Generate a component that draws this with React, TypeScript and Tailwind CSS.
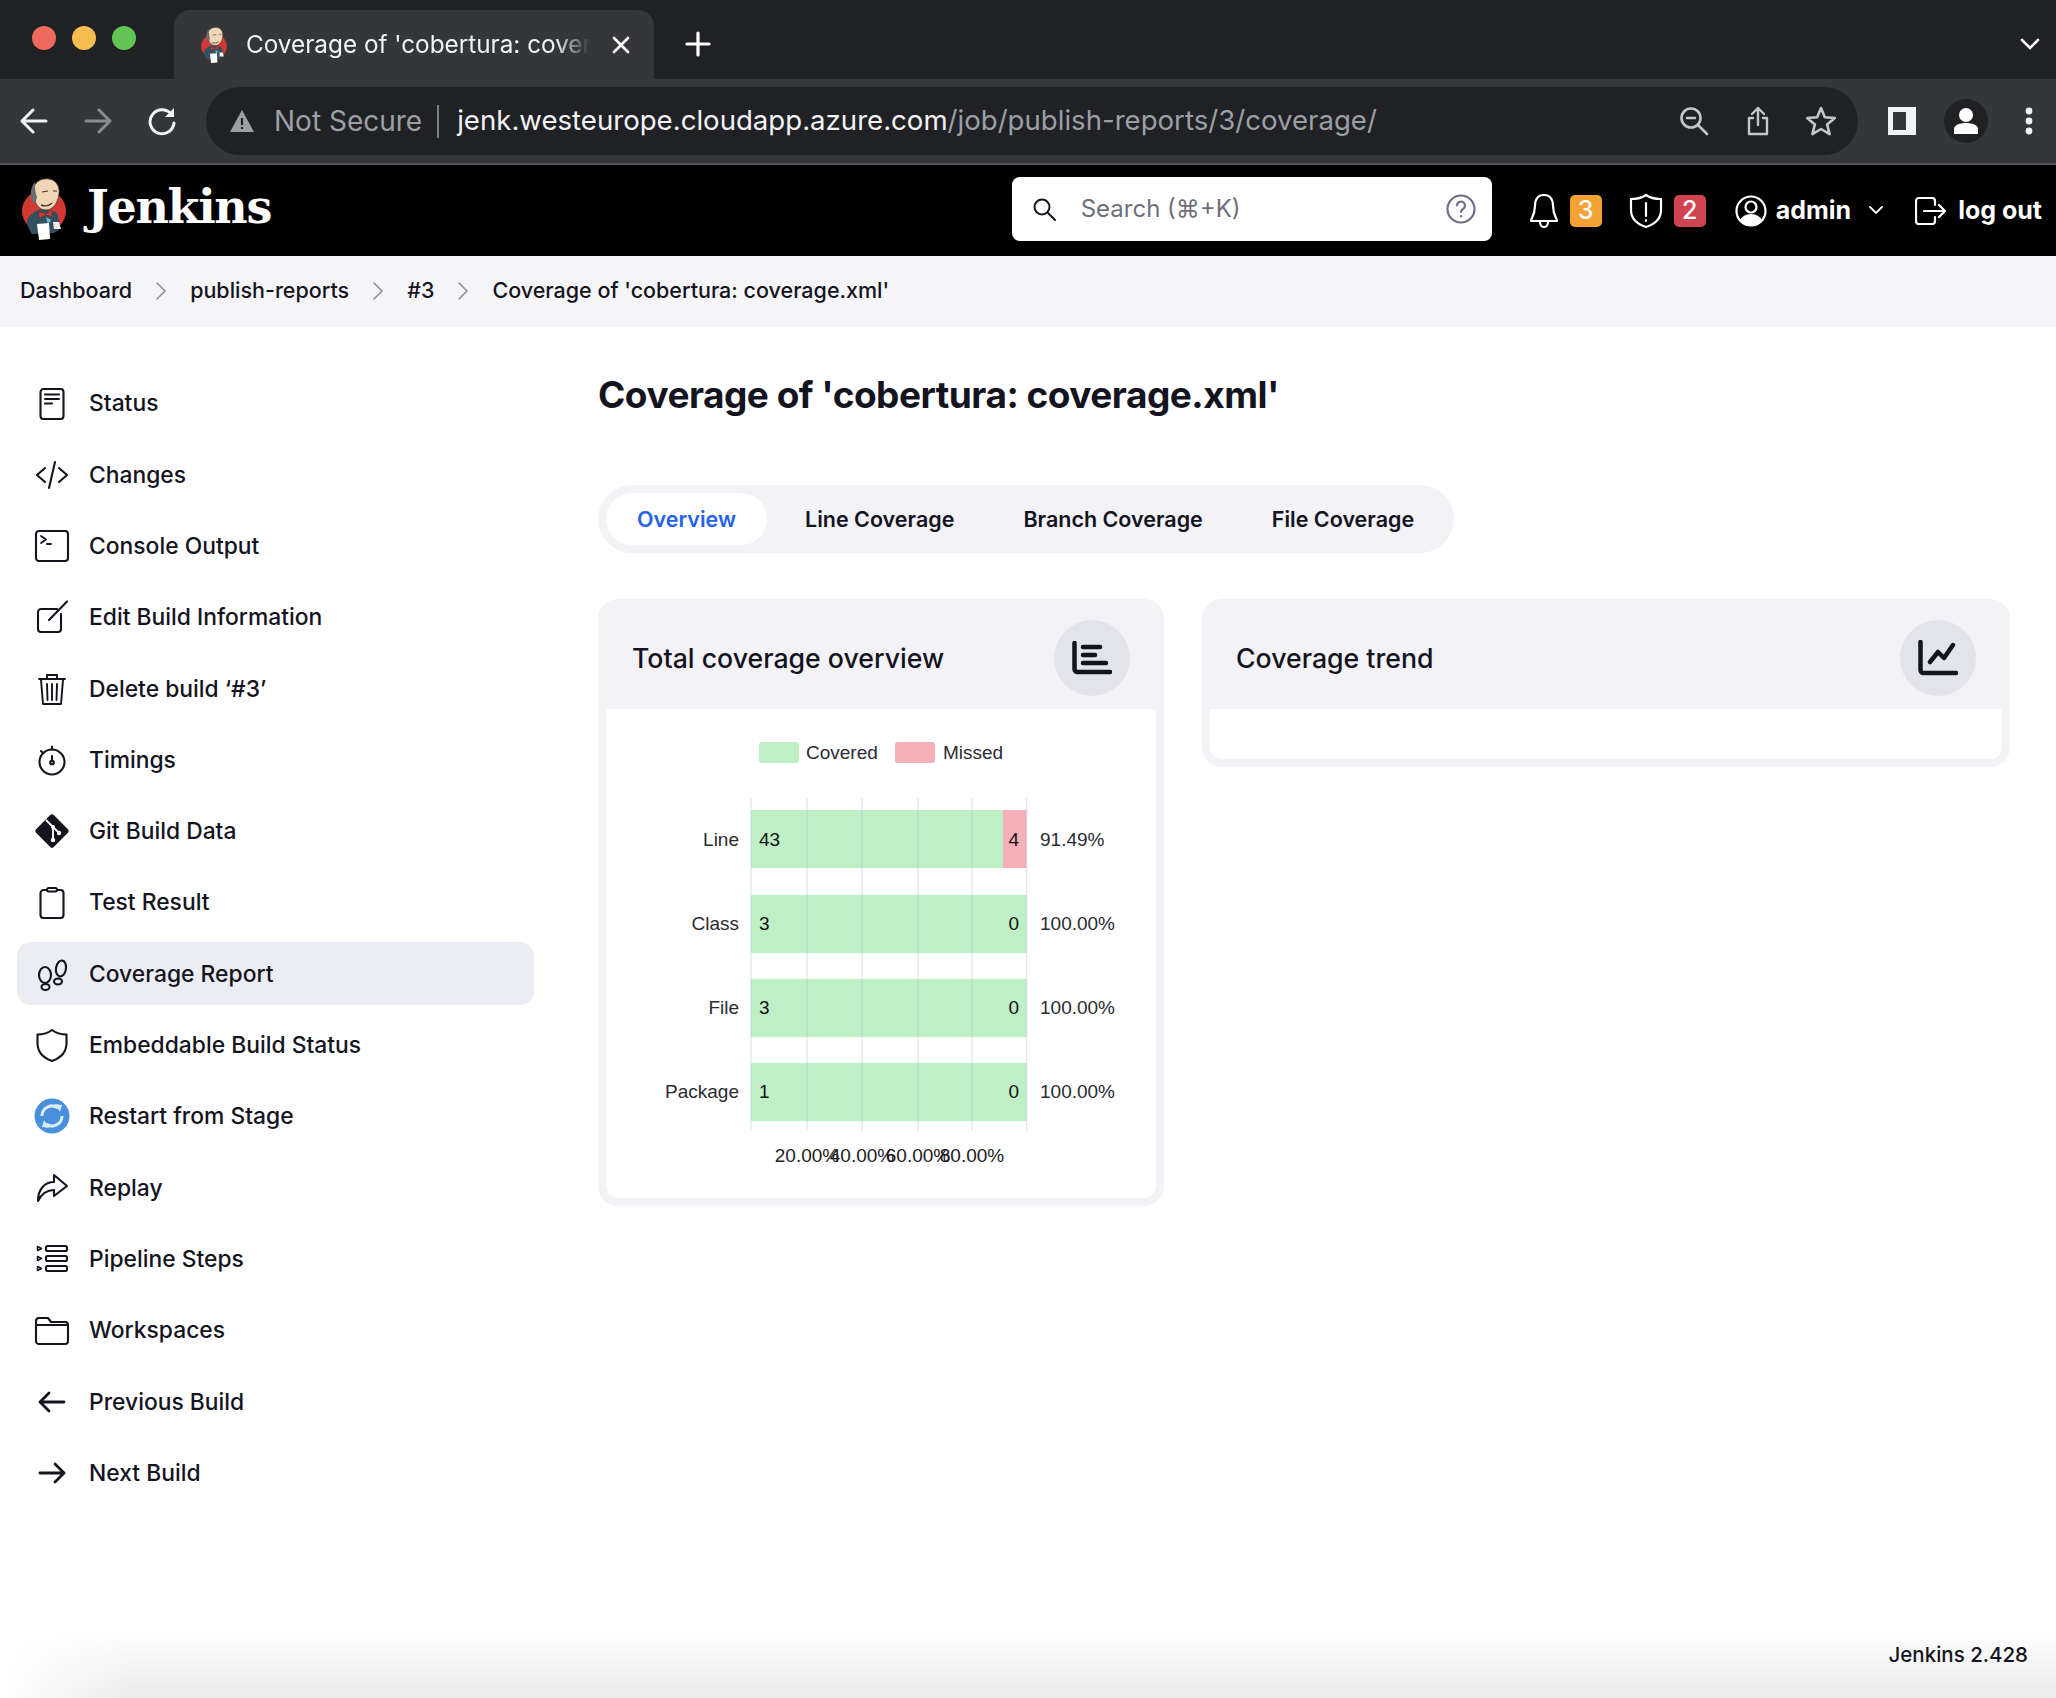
import type { ReactNode } from "react";

const ink = "#14141f";

function Ico({ children, size = 36 }: { children: ReactNode; size?: number }) {
  return (
    <svg width={size} height={size} viewBox="0 0 36 36" fill="none" stroke={ink} strokeWidth={2.1} strokeLinecap="round" strokeLinejoin="round" className="shrink-0">
      {children}
    </svg>
  );
}

const sideItems: { label: string; icon: ReactNode; active?: boolean }[] = [
  {
    label: "Status",
    icon: (
      <Ico>
        <rect x="6.5" y="3" width="23" height="30" rx="3" />
        <path d="M11 8.5h14M11 13h14M11 17.5h7" />
      </Ico>
    ),
  },
  {
    label: "Changes",
    icon: (
      <Ico>
        <path d="M11 11l-8 7 8 7M25 11l8 7-8 7M21 5l-6 26" />
      </Ico>
    ),
  },
  {
    label: "Console Output",
    icon: (
      <Ico>
        <rect x="2" y="3" width="32" height="30" rx="3" />
        <path d="M7 8l5 3.5L7 15M13 16h4" strokeWidth={1.8} />
      </Ico>
    ),
  },
  {
    label: "Edit Build Information",
    icon: (
      <Ico>
        <path d="M23 10H7a3 3 0 0 0-3 3v17a3 3 0 0 0 3 3h17a3 3 0 0 0 3-3V15M15 21L33 2.5" />
      </Ico>
    ),
  },
  {
    label: "Delete build \u2018#3\u2019",
    icon: (
      <Ico>
        <path d="M5 8h26M13 7.5V4h10v3.5M7 9l2 24h18l2-24M13 13l.5 16M18 13v16M23 13l-.5 16" strokeWidth={1.9} />
      </Ico>
    ),
  },
  {
    label: "Timings",
    icon: (
      <Ico>
        <circle cx="18" cy="20" r="12.5" />
        <path d="M18 4.5v3M7 9l2 2M18 14v5" />
        <circle cx="18" cy="20.5" r="1.8" />
      </Ico>
    ),
  },
  {
    label: "Git Build Data",
    icon: (
      <svg width="36" height="36" viewBox="0 0 36 36" className="shrink-0">
        <rect x="5.5" y="5.5" width="25" height="25" rx="2.5" transform="rotate(45 18 18)" fill={ink} />
        <path d="M12 7l7 7M19 14v13M19 14l6 6" stroke="#fff" strokeWidth="1.9" fill="none" />
        <circle cx="19" cy="14" r="2" fill="#fff" />
        <circle cx="19" cy="27" r="2.2" fill="#fff" />
        <circle cx="25" cy="20" r="2.2" fill="#fff" />
      </svg>
    ),
  },
  {
    label: "Test Result",
    icon: (
      <Ico>
        <rect x="6.5" y="5" width="23" height="28" rx="3" />
        <rect x="13" y="3" width="10" height="3.5" rx="1.7" fill="#fff" />
      </Ico>
    ),
  },
  {
    label: "Coverage Report",
    active: true,
    icon: (
      <Ico>
        <ellipse cx="11" cy="19" rx="6" ry="8" />
        <ellipse cx="11.5" cy="31" rx="4" ry="3" />
        <ellipse cx="27" cy="12.5" rx="5" ry="8" transform="rotate(10 27 12.5)" />
        <ellipse cx="24" cy="25.5" rx="4" ry="3" />
      </Ico>
    ),
  },
  {
    label: "Embeddable Build Status",
    icon: (
      <Ico>
        <path d="M18 3c4 3 9 4.500 14.500 4.500V16c0 9-6 15-14.500 18C9.500 31 3.500 25 3.500 16V7.500C9 7.500 14 6 18 3z" />
      </Ico>
    ),
  },
  {
    label: "Restart from Stage",
    icon: (
      <svg width="36" height="36" viewBox="0 0 36 36" className="shrink-0">
        <circle cx="18" cy="18" r="17.500" fill="#4a8fdc" />
        <g fill="none" stroke="#d8ecfb" strokeWidth="3">
          <path d="M8 18a10 10 0 0 1 16-8" />
          <path d="M28 18a10 10 0 0 1-16 8" />
        </g>
        <path d="M21 6l7 1-2 7zM15 30l-7-1 2-7z" fill="#d8ecfb" />
      </svg>
    ),
  },
  {
    label: "Replay",
    icon: (
      <Ico>
        <path d="M20 5l13 11-13 10v-6c-7 0-12 3-16 11 0-12 7-19 16-19V5z" />
      </Ico>
    ),
  },
  {
    label: "Pipeline Steps",
    icon: (
      <Ico>
        <rect x="12" y="5" width="21" height="5" rx="1.5" />
        <rect x="12" y="15" width="21" height="5" rx="1.5" />
        <rect x="12" y="25" width="21" height="5" rx="1.5" />
        <path d="M3.500 5.500l4 2-4 2zM3.500 15.500l4 2-4 2zM3.500 25.500l4 2-4 2z" strokeWidth={1.5} />
      </Ico>
    ),
  },
  {
    label: "Workspaces",
    icon: (
      <Ico>
        <path d="M2 9a3 3 0 0 1 3-3h9l3 4h14a3 3 0 0 1 3 3v16a3 3 0 0 1-3 3H5a3 3 0 0 1-3-3V9zM2 13h32" />
      </Ico>
    ),
  },
  {
    label: "Previous Build",
    icon: (
      <Ico>
        <path d="M6 18h24M15 9l-9 9 9 9" strokeWidth={2.8} />
      </Ico>
    ),
  },
  {
    label: "Next Build",
    icon: (
      <Ico>
        <path d="M6 18h24M21 9l9 9-9 9" strokeWidth={2.8} />
      </Ico>
    ),
  },
];

function JenkinsLogo({ className }: { className: string }) {
  return (
    <svg viewBox="0 0 44 62" className={className}>
      <ellipse cx="22" cy="33" rx="22" ry="21" fill="#d33833" />
      <path d="M5 42c3-6 9-10 15-11l14 3c3 5 4 11 3 18l-5 3-22 1c-3-4-5-9-5-14z" fill="#335061" />
      <path d="M12 9C14 3 20 0 27 1c7 1 11 7 10 15-1 9-6 16-13 16-6 0-9-4-11-9-1-4-2-9-1-14z" fill="#f0d6b7" stroke="#49352b" strokeWidth=".8" />
      <path d="M10 24c-2-6-2-14 3-20 0 5 0 11 2 15l-2 7z" fill="#6d6b6d" />
      <path d="M19 27c4 1.500 8 1 11-2" stroke="#49352b" strokeWidth="1.400" fill="none" />
      <path d="M20 14l6-1M31 13l4 0" stroke="#49352b" strokeWidth="1" />
      <path d="M17 33l7 3 6-4v7l-6-2-7 3z" fill="#d33833" stroke="#49352b" strokeWidth=".5" />
      <path d="M24 39l5 3-3 5z" fill="#81b0c4" />
      <path d="M15 46l12-1 1 16-11 1z" fill="#fff" />
      <path d="M31 44h6l2 7h-7z" fill="#f0f0f0" />
    </svg>
  );
}

function Chip({ text, bg }: { text: string; bg: string }) {
  return <span className={`ml-[11px] flex h-[32px] w-[32px] items-center justify-center rounded-[5px] text-[25px] font-medium text-white ${bg}`}>{text}</span>;
}

const rows = [
  { name: "Line", covered: "43", missed: "4", pct: "91.49%", y: 101, split: 397, dy: 36 },
  { name: "Class", covered: "3", missed: "0", pct: "100.00%", y: 186, split: 420.500, dy: 35 },
  { name: "File", covered: "3", missed: "0", pct: "100.00%", y: 270, split: 420.500, dy: 35 },
  { name: "Package", covered: "1", missed: "0", pct: "100.00%", y: 354, split: 420.500, dy: 35 },
];

function CoverageChart() {
  const grid = [145, 201, 256, 312, 366, 420.500];
  const txt = { fontFamily: "'Liberation Sans', Arial, sans-serif", fontSize: 19, fill: "#2b2b33" };
  return (
    <svg width="550" height="489" viewBox="0 0 550 489" className="block">
      <rect x="153" y="33" width="40" height="21" rx="3" fill="#bfefc5" />
      <text x="200" y="50" {...txt}>Covered</text>
      <rect x="289" y="33" width="40" height="21" rx="3" fill="#f5b0b8" />
      <text x="337" y="50" {...txt}>Missed</text>
      {rows.map((r) => (
        <g key={r.name}>
          <rect x="145" y={r.y} width={r.split - 145} height="58" fill="#bfefc5" />
          {r.split < 420 && <rect x={r.split} y={r.y} width={420.500 - r.split} height="58" fill="#f5b0b8" />}
          <text x="133" y={r.y + r.dy} textAnchor="end" {...txt}>{r.name}</text>
          <text x="153" y={r.y + r.dy} {...txt} fill="#111">{r.covered}</text>
          <text x="413" y={r.y + r.dy} textAnchor="end" {...txt} fill="#111">{r.missed}</text>
          <text x="434" y={r.y + r.dy} {...txt}>{r.pct}</text>
        </g>
      ))}
      {grid.map((x) => (
        <line key={x} x1={x} x2={x} y1="89" y2="422" stroke="#a5b4d9" strokeOpacity=".35" strokeWidth="1.300" />
      ))}
      {[["20.00%", 201], ["40.00%", 256], ["60.00%", 312], ["80.00%", 366]].map(([t, x]) => (
        <text key={t} x={x} y="453" textAnchor="middle" {...txt} fill="#1c1c24">{t}</text>
      ))}
    </svg>
  );
}

function Card({ title, width, icon, children }: { title: string; width: string; icon: ReactNode; children: ReactNode }) {
  return (
    <div className={`${width} rounded-[20px] bg-[#f2f2f7] px-[8px] pb-[8px]`}>
      <div className="flex h-[110px] items-center justify-between px-[26px] pt-[7px]">
        <h2 className="mt-[2px] text-[26.700px] font-medium text-[#14141f]">{title}</h2>
        <span className="flex h-[76px] w-[76px] items-center justify-center rounded-full bg-[#e3e3ec]">{icon}</span>
      </div>
      <div className="rounded-b-[12px] bg-white">{children}</div>
    </div>
  );
}

export default function App() {
  return (
    <div className="flex h-[1698px] flex-col overflow-hidden bg-white font-['Inter',sans-serif] text-[#14141f]">
      {/* browser tab strip */}
      <div className="flex h-[79px] shrink-0 items-end bg-[#202124] text-white">
        <div className="mb-[29px] ml-[32px] flex gap-[16px]">
          <span className="h-[24px] w-[24px] rounded-full bg-[#ee6a5f]" />
          <span className="h-[24px] w-[24px] rounded-full bg-[#f5bd4f]" />
          <span className="h-[24px] w-[24px] rounded-full bg-[#61c454]" />
        </div>
        <div className="ml-[38px] flex h-[69px] w-[480px] items-center rounded-t-[16px] bg-[#35363a] pl-[26px]">
          <JenkinsLogo className="h-[36px] w-[28px] shrink-0" />
          <span className="ml-[18px] w-[344px] overflow-hidden whitespace-nowrap text-[24.300px] text-[#f1f3f4] [mask-image:linear-gradient(to_right,black_90%,transparent)]">Coverage of 'cobertura: coverage.xml'</span>
          <svg width="18" height="18" viewBox="0 0 18 18" className="ml-[22px] shrink-0" stroke="#fff" strokeWidth="2.600" strokeLinecap="round">
            <path d="M2 2l14 14M16 2L2 16" />
          </svg>
        </div>
        <svg width="26" height="26" viewBox="0 0 26 26" className="mb-[22px] ml-[31px]" stroke="#fff" strokeWidth="3.200" strokeLinecap="round">
          <path d="M13 2v22M2 13h22" />
        </svg>
        <svg width="20" height="12" viewBox="0 0 20 12" className="mb-[29px] ml-auto mr-[16px]" fill="none" stroke="#fff" strokeWidth="2.600" strokeLinecap="round">
          <path d="M2 2l8 8 8-8" />
        </svg>
      </div>

      {/* browser toolbar */}
      <div className="flex h-[86px] shrink-0 items-center border-b-2 border-[#58595c] bg-[#35363a]">
        <div className="flex w-[206px] shrink-0 items-center">
          <svg width="28" height="26" viewBox="0 0 28 26" className="ml-[20px]" fill="none" stroke="#f1f3f4" strokeWidth="3" strokeLinecap="round" strokeLinejoin="round">
            <path d="M26 13H3M13 2L2 13l11 11" />
          </svg>
          <svg width="28" height="26" viewBox="0 0 28 26" className="ml-[36px]" fill="none" stroke="#8a8b8e" strokeWidth="3" strokeLinecap="round" strokeLinejoin="round">
            <path d="M2 13h23M15 2l11 11-11 11" />
          </svg>
          <svg width="30" height="30" viewBox="0 0 30 30" className="ml-[35px]" fill="none" stroke="#f1f3f4" strokeWidth="3" strokeLinecap="round">
            <path d="M25 9A12 12 0 1 0 27 17" />
            <path d="M27 2v9h-9z" fill="#f1f3f4" strokeWidth="0" />
          </svg>
        </div>
        <div className="flex h-[68px] w-[1652px] shrink-0 items-center rounded-full bg-[#202124] pl-[24px] pr-[22px]">
          <svg width="24" height="24" viewBox="0 0 24 24" className="shrink-0">
            <path d="M12 1L24 23H0z" fill="#9aa0a6" />
            <path d="M12 9v7M12 18v2" stroke="#202124" strokeWidth="2.200" />
          </svg>
          <span className="ml-[20px] text-[28px] text-[#9aa0a6]">Not Secure</span>
          <span className="ml-[15px] h-[33px] w-[2px] bg-[#7a7c80]" />
          <span className="ml-[18px] whitespace-nowrap text-[27.600px] text-[#f1f3f4]">
            jenk.westeurope.cloudapp.azure.com<span className="text-[#9aa0a6]">/job/publish-reports/3/coverage/</span>
          </span>
          <svg width="30" height="30" viewBox="0 0 30 30" className="ml-auto shrink-0" fill="none" stroke="#c4c7c9" strokeWidth="2.600" strokeLinecap="round">
            <circle cx="12" cy="12" r="9.500" />
            <path d="M8 12h8M19 19l9 9" />
          </svg>
          <svg width="26" height="30" viewBox="0 0 26 30" className="ml-[36px] shrink-0" fill="none" stroke="#c4c7c9" strokeWidth="2.400" strokeLinecap="round" strokeLinejoin="round">
            <path d="M8 12H4v16h18V12h-4M13 19V2M7 8l6-6 6 6" />
          </svg>
          <svg width="30" height="30" viewBox="0 0 30 30" className="ml-[35px] shrink-0" fill="none" stroke="#c4c7c9" strokeWidth="2.600" strokeLinejoin="round">
            <path d="M15 2l3.800 9.300 10 .7-7.700 6.400 2.500 9.700L15 23l-8.600 5.100 2.500-9.700L1.200 12l10-.7z" />
          </svg>
        </div>
        <div className="ml-[30px] h-[28px] w-[28px] shrink-0 border-[5px] border-r-[10px] border-[#f1f3f4] bg-[#35363a]" />
        <div className="ml-[28px] flex h-[44px] w-[44px] shrink-0 items-center justify-center rounded-full bg-[#202124]">
          <svg width="26" height="28" viewBox="0 0 26 28" fill="#fff">
            <circle cx="13" cy="8" r="7" />
            <path d="M1 27v-5c0-4 6-6 12-6s12 2 12 6v5z" />
          </svg>
        </div>
        <svg width="8" height="28" viewBox="0 0 8 28" className="ml-[37px] shrink-0" fill="#f1f3f4">
          <circle cx="4" cy="4" r="3.400" />
          <circle cx="4" cy="14" r="3.400" />
          <circle cx="4" cy="24" r="3.400" />
        </svg>
      </div>

      {/* jenkins header */}
      <header className="flex h-[91px] shrink-0 items-center bg-black text-white">
        <JenkinsLogo className="mb-[4px] ml-[22px] h-[62px] w-[44px]" />
        <span className="mb-[8px] ml-[21px] font-['DejaVu_Serif',serif] text-[46px] font-bold leading-none tracking-[-1.300px]">Jenkins</span>
        <div className="mb-[3px] ml-auto flex h-[64px] w-[480px] items-center rounded-[8px] bg-white pl-[20px] pr-[16px] text-[#6f6f7c]">
          <svg width="24" height="24" viewBox="0 0 24 24" fill="none" stroke={ink} strokeWidth="2" strokeLinecap="round">
            <circle cx="10" cy="10" r="7.500" />
            <path d="M16 16l7 7" />
          </svg>
          <span className="ml-[25px] text-[24px]">Search (⌘+K)</span>
          <svg width="30" height="30" viewBox="0 0 30 30" className="ml-auto" fill="none" stroke="#6e6e88" strokeWidth="2.200" strokeLinecap="round">
            <circle cx="15" cy="15" r="13.500" />
            <path d="M11 11.500a4 4 0 1 1 6 3.500c-1.500 1-2 1.500-2 3M15 22v.5" />
          </svg>
        </div>
        <svg width="30" height="36" viewBox="0 0 30 36" className="ml-[37px]" fill="none" stroke="#fff" strokeWidth="2.200" strokeLinejoin="round">
          <path d="M15 2c-6 0-9 4-9 11 0 7-2 10-4 14v1h26v-1c-2-4-4-7-4-14 0-7-3-11-9-11zM11 29a4 5 0 0 0 8 0" />
        </svg>
        <Chip text="3" bg="bg-[#f4a236]" />
        <svg width="34" height="36" viewBox="0 0 34 36" className="ml-[27px]" fill="none" stroke="#fff" strokeWidth="2.200" strokeLinecap="round">
          <path d="M17 2c4 3 9 4 15 4v11c0 8-6 14-15 17C8 31 2 25 2 17V6c6 0 11-1 15-4zM17 10v13M17 27v1" />
        </svg>
        <Chip text="2" bg="bg-[#d0444f]" />
        <svg width="32" height="32" viewBox="0 0 32 32" className="ml-[29px]" fill="none" stroke="#fff" strokeWidth="2.200">
          <circle cx="16" cy="16" r="14.500" />
          <circle cx="16" cy="12" r="5.500" />
          <path d="M6 26c2-5 6-6 10-6s8 1 10 6c-3 3-6 4-10 4s-7-1-10-4z" fill="#fff" />
        </svg>
        <span className="ml-[9px] text-[25px] font-bold">admin</span>
        <svg width="14" height="9" viewBox="0 0 14 9" className="ml-[18px]" fill="none" stroke="#fff" strokeWidth="1.800" strokeLinecap="round">
          <path d="M1 1l6 6 6-6" />
        </svg>
        <svg width="32" height="28" viewBox="0 0 32 28" className="ml-[32px]" fill="none" stroke="#fff" strokeWidth="2.200" strokeLinecap="round" strokeLinejoin="round">
          <path d="M20 8V4a3 3 0 0 0-3-3H4a3 3 0 0 0-3 3v20a3 3 0 0 0 3 3h13a3 3 0 0 0 3-3v-4M9 14h21M24 8l6 6-6 6" />
        </svg>
        <span className="ml-[11px] mr-[14px] text-[25px] font-bold">log out</span>
      </header>

      {/* breadcrumbs */}
      <nav className="flex h-[71px] shrink-0 items-center bg-[#f5f5f7] pb-[2px] pl-[20px] text-[21.500px] font-medium">
        <span>Dashboard</span>
        <Sep />
        <span>publish-reports</span>
        <Sep />
        <span>#3</span>
        <Sep />
        <span>Coverage of 'cobertura: coverage.xml'</span>
      </nav>

      <main className="flex flex-1">
        <aside className="ml-[17px] flex w-[517px] shrink-0 flex-col gap-[8.300px] pt-[45px]">
          {sideItems.map((item) => (
            <div key={item.label} className={`flex h-[63px] items-center gap-[19px] rounded-[14px] pl-[17px] text-[22.850px] font-medium ${item.active ? "bg-[#ecedf2]" : ""}`}>
              {item.icon}
              <span>{item.label}</span>
            </div>
          ))}
        </aside>

        <section className="ml-[64px] pt-[45px]">
          <h1 className="text-[37px] font-bold leading-[46px] tracking-[-0.500px]">Coverage of 'cobertura: coverage.xml'</h1>
          <div className="mt-[67px] flex h-[68px] w-[856px] items-center gap-[7px] whitespace-nowrap rounded-full bg-[#f2f2f7] px-[8px] text-[21.500px] font-semibold">
            <span className="flex h-[52px] items-center rounded-full bg-white px-[31px] text-[#2563eb]">Overview</span>
            <span className="px-[31px]">Line Coverage</span>
            <span className="px-[31px]">Branch Coverage</span>
            <span className="px-[31px]">File Coverage</span>
          </div>
          <div className="mt-[46px] flex items-start gap-[38px]">
            <Card
              title="Total coverage overview"
              width="w-[566px]"
              icon={
                <svg width="40" height="34" viewBox="0 0 40 34" fill="none" stroke={ink} strokeWidth="4.500" strokeLinecap="round">
                  <path d="M2.500 2v26a3 3 0 0 0 3 3H38M11 6h17M11 14h12M11 22h23" />
                </svg>
              }
            >
              <CoverageChart />
            </Card>
            <Card
              title="Coverage trend"
              width="w-[808px]"
              icon={
                <svg width="40" height="36" viewBox="0 0 40 36" fill="none" stroke={ink} strokeWidth="4.500" strokeLinecap="round" strokeLinejoin="round">
                  <path d="M2.500 2v28a3 3 0 0 0 3 3H38M12 22l8-10 6 6 9-13" />
                </svg>
              }
            >
              <div className="h-[50px]" />
            </Card>
          </div>
        </section>
      </main>

      <footer className="flex h-[70px] shrink-0 items-start justify-end bg-[linear-gradient(to_right,#fff,transparent_130px),linear-gradient(to_bottom,#fff,#ebebeb)] pr-[28px] pt-[12px] text-[20.500px] font-medium">
        Jenkins 2.428
      </footer>
    </div>
  );
}

function Sep() {
  return (
    <svg width="12" height="20" viewBox="0 0 12 20" className="mx-[23px] shrink-0" fill="none" stroke="#8c8c98" strokeWidth="1.500" strokeLinecap="round">
      <path d="M2 2l8 8-8 8" />
    </svg>
  );
}
